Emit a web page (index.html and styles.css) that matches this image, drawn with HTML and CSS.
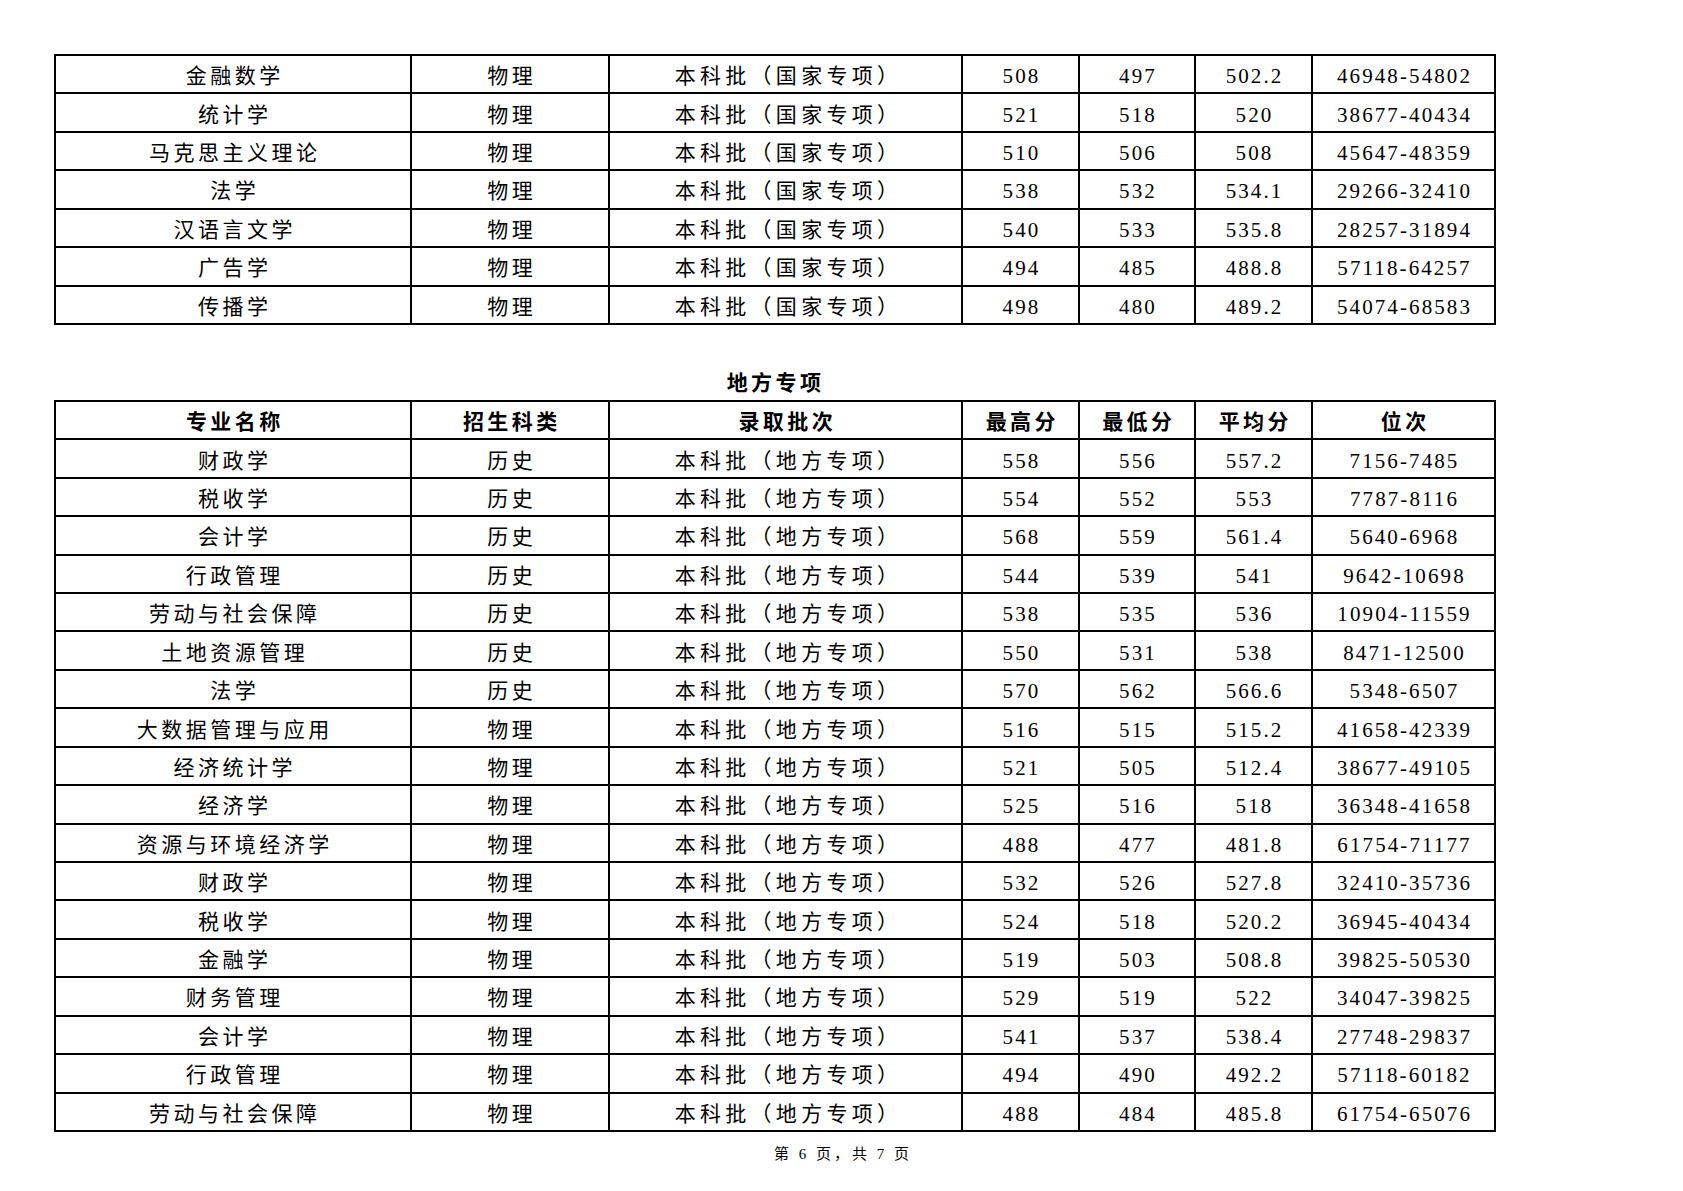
FILE: index.html
```html
<!DOCTYPE html>
<html lang="zh-CN">
<head>
<meta charset="utf-8">
<title>第6页</title>
<link rel="stylesheet" href="styles.css">
</head>
<body>
<div class="page">
  <div class="sheet">
    <table class="grid">
      <colgroup>
        <col class="c1"><col class="c2"><col class="c3"><col class="c4"><col class="c5"><col class="c6"><col class="c7">
      </colgroup>
      <tbody>
        <tr><td>金融数学</td><td>物理</td><td>本科批（国家专项）</td><td>508</td><td>497</td><td>502.2</td><td>46948-54802</td></tr>
        <tr><td>统计学</td><td>物理</td><td>本科批（国家专项）</td><td>521</td><td>518</td><td>520</td><td>38677-40434</td></tr>
        <tr><td>马克思主义理论</td><td>物理</td><td>本科批（国家专项）</td><td>510</td><td>506</td><td>508</td><td>45647-48359</td></tr>
        <tr><td>法学</td><td>物理</td><td>本科批（国家专项）</td><td>538</td><td>532</td><td>534.1</td><td>29266-32410</td></tr>
        <tr><td>汉语言文学</td><td>物理</td><td>本科批（国家专项）</td><td>540</td><td>533</td><td>535.8</td><td>28257-31894</td></tr>
        <tr><td>广告学</td><td>物理</td><td>本科批（国家专项）</td><td>494</td><td>485</td><td>488.8</td><td>57118-64257</td></tr>
        <tr><td>传播学</td><td>物理</td><td>本科批（国家专项）</td><td>498</td><td>480</td><td>489.2</td><td>54074-68583</td></tr>
      </tbody>
    </table>

    <div class="section-title">地方专项</div>

    <table class="grid">
      <colgroup>
        <col class="c1"><col class="c2"><col class="c3"><col class="c4"><col class="c5"><col class="c6"><col class="c7">
      </colgroup>
      <thead>
        <tr><th>专业名称</th><th>招生科类</th><th>录取批次</th><th>最高分</th><th>最低分</th><th>平均分</th><th>位次</th></tr>
      </thead>
      <tbody>
        <tr><td>财政学</td><td>历史</td><td>本科批（地方专项）</td><td>558</td><td>556</td><td>557.2</td><td>7156-7485</td></tr>
        <tr><td>税收学</td><td>历史</td><td>本科批（地方专项）</td><td>554</td><td>552</td><td>553</td><td>7787-8116</td></tr>
        <tr><td>会计学</td><td>历史</td><td>本科批（地方专项）</td><td>568</td><td>559</td><td>561.4</td><td>5640-6968</td></tr>
        <tr><td>行政管理</td><td>历史</td><td>本科批（地方专项）</td><td>544</td><td>539</td><td>541</td><td>9642-10698</td></tr>
        <tr><td>劳动与社会保障</td><td>历史</td><td>本科批（地方专项）</td><td>538</td><td>535</td><td>536</td><td>10904-11559</td></tr>
        <tr><td>土地资源管理</td><td>历史</td><td>本科批（地方专项）</td><td>550</td><td>531</td><td>538</td><td>8471-12500</td></tr>
        <tr><td>法学</td><td>历史</td><td>本科批（地方专项）</td><td>570</td><td>562</td><td>566.6</td><td>5348-6507</td></tr>
        <tr><td>大数据管理与应用</td><td>物理</td><td>本科批（地方专项）</td><td>516</td><td>515</td><td>515.2</td><td>41658-42339</td></tr>
        <tr><td>经济统计学</td><td>物理</td><td>本科批（地方专项）</td><td>521</td><td>505</td><td>512.4</td><td>38677-49105</td></tr>
        <tr><td>经济学</td><td>物理</td><td>本科批（地方专项）</td><td>525</td><td>516</td><td>518</td><td>36348-41658</td></tr>
        <tr><td>资源与环境经济学</td><td>物理</td><td>本科批（地方专项）</td><td>488</td><td>477</td><td>481.8</td><td>61754-71177</td></tr>
        <tr><td>财政学</td><td>物理</td><td>本科批（地方专项）</td><td>532</td><td>526</td><td>527.8</td><td>32410-35736</td></tr>
        <tr><td>税收学</td><td>物理</td><td>本科批（地方专项）</td><td>524</td><td>518</td><td>520.2</td><td>36945-40434</td></tr>
        <tr><td>金融学</td><td>物理</td><td>本科批（地方专项）</td><td>519</td><td>503</td><td>508.8</td><td>39825-50530</td></tr>
        <tr><td>财务管理</td><td>物理</td><td>本科批（地方专项）</td><td>529</td><td>519</td><td>522</td><td>34047-39825</td></tr>
        <tr><td>会计学</td><td>物理</td><td>本科批（地方专项）</td><td>541</td><td>537</td><td>538.4</td><td>27748-29837</td></tr>
        <tr><td>行政管理</td><td>物理</td><td>本科批（地方专项）</td><td>494</td><td>490</td><td>492.2</td><td>57118-60182</td></tr>
        <tr><td>劳动与社会保障</td><td>物理</td><td>本科批（地方专项）</td><td>488</td><td>484</td><td>485.8</td><td>61754-65076</td></tr>
      </tbody>
    </table>
  </div>
  <div class="footer">第 6 页，共 7 页</div>
</div>
</body>
</html>
```

FILE: styles.css
```css
html, body {
  margin: 0;
  padding: 0;
  background: #ffffff;
}

body {
  color: #000000;
  font-family: "Liberation Serif", "Noto Sans CJK SC", serif;
}

.page {
  width: 1683px;
  padding-top: 54px;
}

.sheet {
  margin-left: 54px;
  width: 1440px;
}

.grid {
  border-collapse: collapse;
  table-layout: fixed;
  width: 1440px;
}

.grid .c1 { width: 356px; }
.grid .c2 { width: 198px; }
.grid .c3 { width: 353px; }
.grid .c4 { width: 117px; }
.grid .c5 { width: 116px; }
.grid .c6 { width: 117px; }
.grid .c7 { width: 183px; }

.grid tr {
  height: 38.43px;
}

.grid td,
.grid th {
  border: 2px solid #000000;
  padding: 4px 0 0 3.5px;
  text-align: center;
  vertical-align: middle;
  font-size: 21px;
  font-weight: 400;
  letter-spacing: 3.5px;
  line-height: 28px;
  white-space: nowrap;
  overflow: hidden;
}

.grid td:nth-child(3) {
  letter-spacing: 4.3px;
  padding-left: 6px;
}

.grid td:nth-child(n+4) {
  letter-spacing: 2.1px;
  padding-left: 2px;
}

.grid th {
  font-weight: 700;
  letter-spacing: 3.4px;
}

.section-title {
  height: 75px;
  box-sizing: border-box;
  padding-top: 44px;
  padding-left: 3px;
  line-height: 28px;
  text-align: center;
  font-size: 21px;
  font-weight: 700;
  letter-spacing: 3.4px;
}

.footer {
  margin-top: 12px;
  padding-left: 3px;
  text-align: center;
  font-size: 15px;
  letter-spacing: 3px;
  line-height: 20px;
}
```
